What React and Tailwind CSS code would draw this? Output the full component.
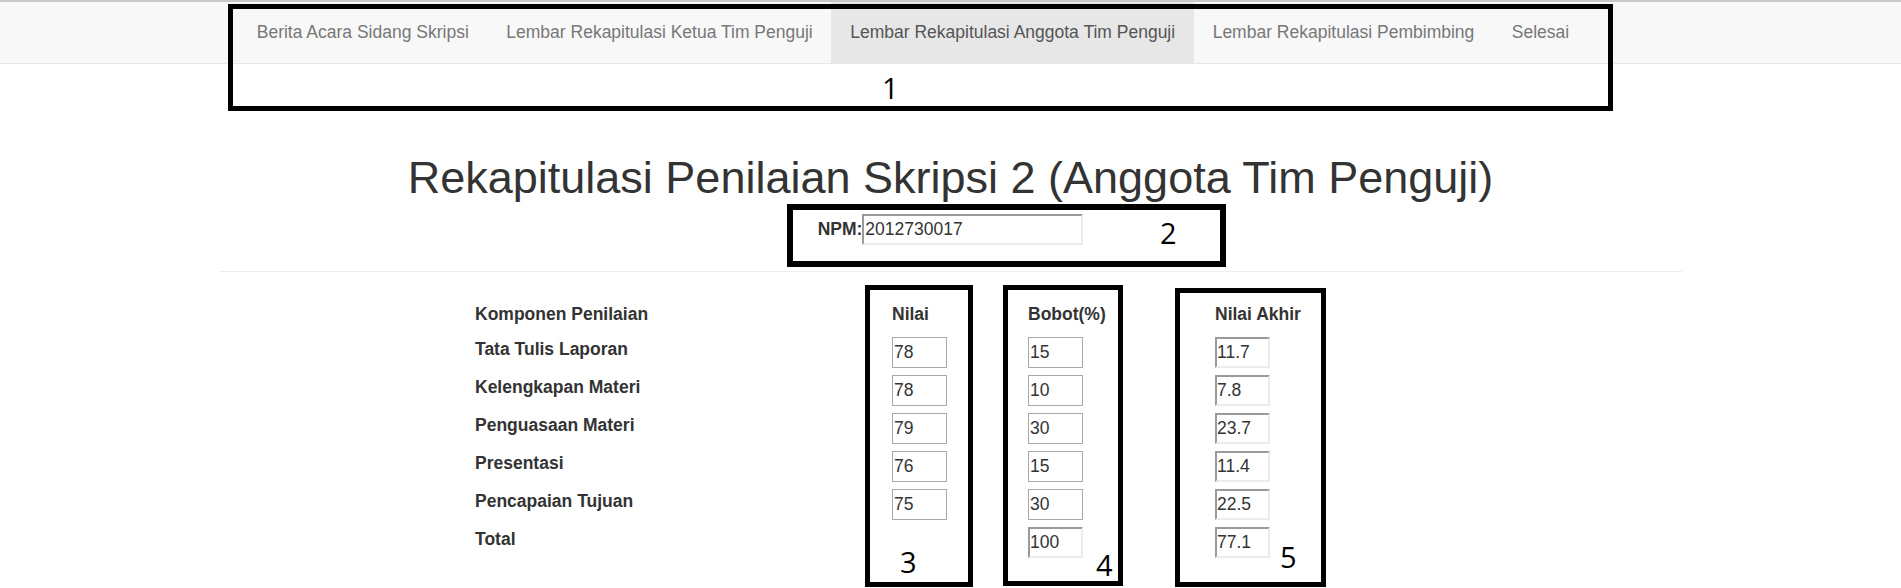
import React from 'react';

const navItems = [
  { label: 'Berita Acara Sidang Skripsi' },
  { label: 'Lembar Rekapitulasi Ketua Tim Penguji' },
  { label: 'Lembar Rekapitulasi Anggota Tim Penguji', active: true },
  { label: 'Lembar Rekapitulasi Pembimbing' },
  { label: 'Selesai' },
];

const rows = [
  { label: 'Tata Tulis Laporan', nilai: '78', bobot: '15', akhir: '11.7' },
  { label: 'Kelengkapan Materi', nilai: '78', bobot: '10', akhir: '7.8' },
  { label: 'Penguasaan Materi', nilai: '79', bobot: '30', akhir: '23.7' },
  { label: 'Presentasi', nilai: '76', bobot: '15', akhir: '11.4' },
  { label: 'Pencapaian Tujuan', nilai: '75', bobot: '30', akhir: '22.5' },
];

function Field({ value }) {
  return (
    <input
      readOnly
      value={value}
      className="h-[31px] w-[55px] border border-[#a9a9a9] bg-white px-[1px] text-[17.5px] text-[#333] outline-none"
    />
  );
}

function InsetField({ value, className = 'w-[55px]' }) {
  return (
    <input
      readOnly
      value={value}
      className={`h-[31px] border-2 border-t-[#9a9a9a] border-l-[#9a9a9a] border-b-[#ececec] border-r-[#ececec] bg-white px-0 text-[17.5px] text-[#333] outline-none ${className}`}
    />
  );
}

function App() {
  return (
    <div className="relative min-h-[588px] overflow-hidden bg-white font-['Liberation_Sans',Arial,sans-serif] text-[#333]">
      <div className="h-[2px] bg-[#c8c8c8]" />
      <nav className="h-[62px] border-b border-[#e7e7e7] bg-[#f8f8f8]">
        <div className="mx-auto flex h-full w-[1463px] px-[19px]">
          {navItems.map((item) => (
            <a
              key={item.label}
              className={`flex items-center px-[18.75px] text-[17.5px] ${
                item.active ? 'bg-[#e7e7e7] text-[#555]' : 'text-[#777]'
              }`}
            >
              {item.label}
            </a>
          ))}
        </div>
      </nav>

      <main className="mx-auto w-[1463px]">
        <h1 className="mt-[89px] text-center text-[45px] font-normal leading-[49.5px]">
          Rekapitulasi Penilaian Skripsi 2 (Anggota Tim Penguji)
        </h1>
        <div className="mt-[11px] flex items-center justify-center">
          <label className="text-[17.5px] font-bold">NPM:</label>
          <InsetField value="2012730017" className="w-[221px] pl-[1px]" />
        </div>
        <hr className="mt-[26px] border-t border-[#eee]" />

        <div className="ml-[256px] mt-[30px] grid grid-cols-[417px_136px_187px_120px] text-[17.5px]">
          <div className="h-[35px] font-bold leading-[25px]">Komponen Penilaian</div>
          <div className="h-[35px] font-bold leading-[25px]">Nilai</div>
          <div className="h-[35px] font-bold leading-[25px]">Bobot(%)</div>
          <div className="h-[35px] font-bold leading-[25px]">Nilai Akhir</div>

          {rows.map((r) => (
            <React.Fragment key={r.label}>
              <div className="h-[38px] font-bold leading-[25px]">{r.label}</div>
              <div className="h-[38px]"><Field value={r.nilai} /></div>
              <div className="h-[38px]"><Field value={r.bobot} /></div>
              <div className="h-[38px]"><InsetField value={r.akhir} /></div>
            </React.Fragment>
          ))}

          <div className="h-[38px] font-bold leading-[25px]">Total</div>
          <div className="h-[38px]" />
          <div className="h-[38px]"><InsetField value="100" /></div>
          <div className="h-[38px]"><InsetField value="77.1" /></div>
        </div>
      </main>

      {/* annotation boxes */}
      <div className="pointer-events-none absolute left-[228px] top-[4px] h-[107px] w-[1385px] border-[5px] border-black" />
      <div className="pointer-events-none absolute left-[787px] top-[204px] h-[63px] w-[439px] border-[6px] border-black" />
      <div className="pointer-events-none absolute left-[865px] top-[285px] h-[302px] w-[108px] border-[5px] border-black" />
      <div className="pointer-events-none absolute left-[1003px] top-[285px] h-[301px] w-[120px] border-[5px] border-black" />
      <div className="pointer-events-none absolute left-[1175px] top-[288px] h-[299px] w-[151px] border-[5px] border-black" />

      <span className="absolute left-[882px] top-[73px] font-['Open_Sans',sans-serif] text-[29px] leading-none text-black">1</span>
      <span className="absolute left-[1160px] top-[218px] font-['Open_Sans',sans-serif] text-[29px] leading-none text-black">2</span>
      <span className="absolute left-[900px] top-[547px] font-['Open_Sans',sans-serif] text-[29px] leading-none text-black">3</span>
      <span className="absolute left-[1096px] top-[550px] font-['Open_Sans',sans-serif] text-[29px] leading-none text-black">4</span>
      <span className="absolute left-[1280px] top-[542px] font-['Open_Sans',sans-serif] text-[29px] leading-none text-black">5</span>
    </div>
  );
}

export default App;
